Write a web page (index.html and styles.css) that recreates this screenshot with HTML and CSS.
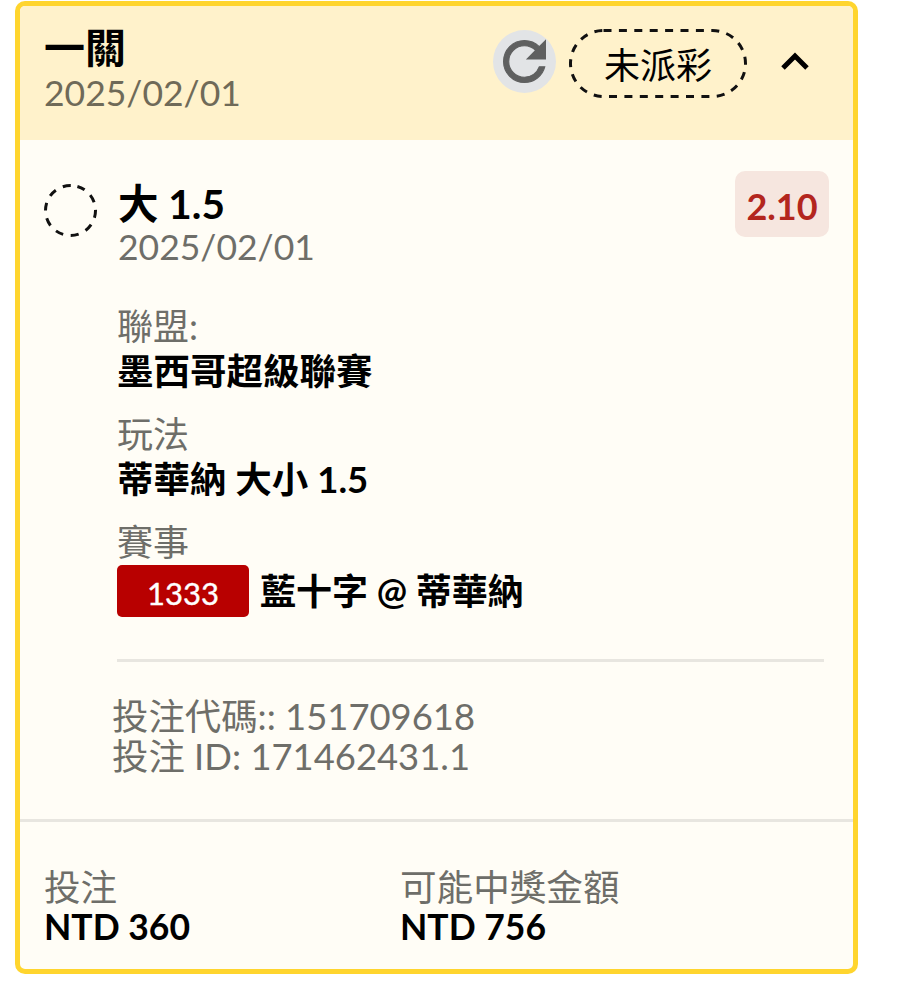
FILE: index.html
```html
<!DOCTYPE html>
<html lang="zh-Hant">
<head>
    <meta charset="UTF-8">
    <meta name="viewport" content="width=device-width, initial-scale=1.0">
    <title>投注</title>
    <link rel="stylesheet" href="styles.css">
</head>
<body>
    <div class="card">
        <!-- Header -->
        <header class="card-head">
            <div class="head-text">
                <div class="head-title">一關</div>
                <div class="head-date">2025/02/01</div>
            </div>
            <div class="head-actions">
                <button class="refresh" aria-label="refresh">
                    <svg viewBox="0 0 24 24" width="63" height="63"><path fill="#5f6060" stroke="#5f6060" stroke-width="0.4" d="M17.65 6.35A7.958 7.958 0 0 0 12 4c-4.42 0-7.99 3.58-7.99 8s3.57 8 7.99 8c3.73 0 6.84-2.55 7.73-6h-2.08A5.99 5.99 0 0 1 12 18c-3.31 0-6-2.69-6-6s2.69-6 6-6c1.66 0 3.14.69 4.22 1.78L13 11h7V4l-2.35 2.35z"/></svg>
                </button>
                <span class="status">
                    <svg class="status-ring" viewBox="0 0 178 69" width="178" height="69"><rect x="1.5" y="1.5" width="175" height="66" rx="33" fill="none" stroke="#111" stroke-width="3" stroke-dasharray="8 7.4"/></svg>
                    未派彩
                </span>
                <svg class="chevron" viewBox="0 0 24 24" width="36" height="36"><path d="M4 16 L12 8 L20 16" fill="none" stroke="#000" stroke-width="3.3"/></svg>
            </div>
        </header>

        <!-- Selection -->
        <section class="selection">
            <div class="sel-top">
                <svg class="sel-mark" viewBox="0 0 53 53" width="53" height="53"><circle cx="26.5" cy="26.5" r="25" fill="none" stroke="#111" stroke-width="3" stroke-dasharray="8 7.7" transform="rotate(-74 26.5 26.5)"/></svg>
                <div class="sel-main">
                    <div class="sel-name">大 1.5</div>
                    <div class="sel-date">2025/02/01</div>
                </div>
                <span class="odds">2.10</span>
            </div>
            <div class="details">
                <div class="detail">
                    <div class="label">聯盟:</div>
                    <div class="value">墨西哥超級聯賽</div>
                </div>
                <div class="detail">
                    <div class="label">玩法</div>
                    <div class="value">蒂華納 大小 1.5</div>
                </div>
                <div class="detail">
                    <div class="label">賽事</div>
                    <div class="value match"><span class="match-no">1333</span>藍十字 @ 蒂華納</div>
                </div>
            </div>
            <div class="codes">
                <div>投注代碼:: 151709618</div>
                <div>投注 ID: 171462431.1</div>
            </div>
        </section>

        <!-- Totals -->
        <footer class="totals">
            <div class="total">
                <div class="total-label">投注</div>
                <div class="total-value">NTD 360</div>
            </div>
            <div class="total">
                <div class="total-label">可能中獎金額</div>
                <div class="total-value">NTD 756</div>
            </div>
        </footer>
    </div>
</body>
</html>
```

FILE: styles.css
```css
body {
    margin: 0;
    padding: 1px 0 0 15px;
    background-color: #fff;
    font-family: 'Lato', 'Noto Sans CJK TC', sans-serif;
    color: #000;
}

.card {
    width: 843px;
    box-sizing: border-box;
    border: 5px solid #ffd52e;
    border-radius: 10px;
    background-color: #fffdf6;
    overflow: hidden;
}

/* Header */
.card-head {
    height: 134px;
    box-sizing: border-box;
    padding: 0 24px;
    background-color: #fff2cb;
    display: flex;
    justify-content: space-between;
    align-items: flex-start;
}

.head-text {
    padding-top: 20px;
}

.head-title {
    font-size: 41px;
    font-weight: 700;
    line-height: 44px;
}

.head-date {
    margin-top: 4px;
    font-size: 35.5px;
    line-height: 38px;
    color: #6f6a58;
}

.head-actions {
    display: flex;
    align-items: flex-start;
    padding-top: 23px;
}

.refresh {
    width: 63px;
    height: 63px;
    padding: 0;
    margin-top: 1px;
    border: none;
    border-radius: 50%;
    background-color: #e2e4e6;
}

.refresh svg {
    display: block;
}

.status {
    position: relative;
    width: 178px;
    height: 69px;
    margin-left: 13px;
    font-size: 36px;
    line-height: 72px;
    text-align: center;
}

.status-ring {
    position: absolute;
    top: 0;
    left: 0;
}

.chevron {
    margin: 15px 16px 0 30px;
}

/* Selection */
.selection {
    padding: 31px 24px 0;
}

.sel-top {
    display: flex;
    align-items: flex-start;
}

.sel-mark {
    margin-top: 13px;
}

.sel-main {
    flex: 1;
    margin-left: 21px;
    padding-top: 9px;
}

.sel-name {
    font-size: 40.5px;
    font-weight: 700;
    line-height: 47px;
}

.sel-date {
    font-size: 35.5px;
    line-height: 40px;
    color: #6e6e69;
}

.odds {
    width: 94px;
    height: 66px;
    border-radius: 10px;
    background-color: #f6e6df;
    color: #b3261e;
    font-size: 36px;
    font-weight: 700;
    line-height: 70px;
    text-align: center;
}

.details {
    margin-left: 73px;
    margin-right: 5px;
    padding-top: 18px;
    padding-bottom: 42px;
    border-bottom: 3px solid #e8e6e0;
}

.detail {
    margin-top: 17px;
}

.detail:first-child {
    margin-top: 18px;
}

.label {
    font-size: 36px;
    line-height: 46px;
    color: #6e6e69;
}

.value {
    font-size: 36.5px;
    font-weight: 700;
    line-height: 45px;
}

.match {
    display: flex;
    align-items: center;
    height: 52px;
    font-size: 36px;
}

.match-no {
    width: 132px;
    height: 52px;
    margin-right: 11px;
    border-radius: 5px;
    background-color: #b80000;
    color: #fff;
    font-size: 31px;
    font-weight: 400;
    -webkit-text-stroke: 0.4px #fff;
    line-height: 56px;
    text-align: center;
}

.codes {
    margin-left: 68px;
    padding-top: 34px;
    padding-bottom: 43px;
    font-size: 36.4px;
    line-height: 40px;
    color: #6e6e69;
}

/* Totals */
.totals {
    display: flex;
    padding: 45px 24px 23px;
    border-top: 3px solid #e8e6e0;
}

.total {
    width: 356px;
}

.total-label {
    font-size: 36.6px;
    line-height: 41px;
    color: #6e6e69;
}

.total-value {
    font-size: 35.5px;
    font-weight: 700;
    line-height: 38px;
}
```
